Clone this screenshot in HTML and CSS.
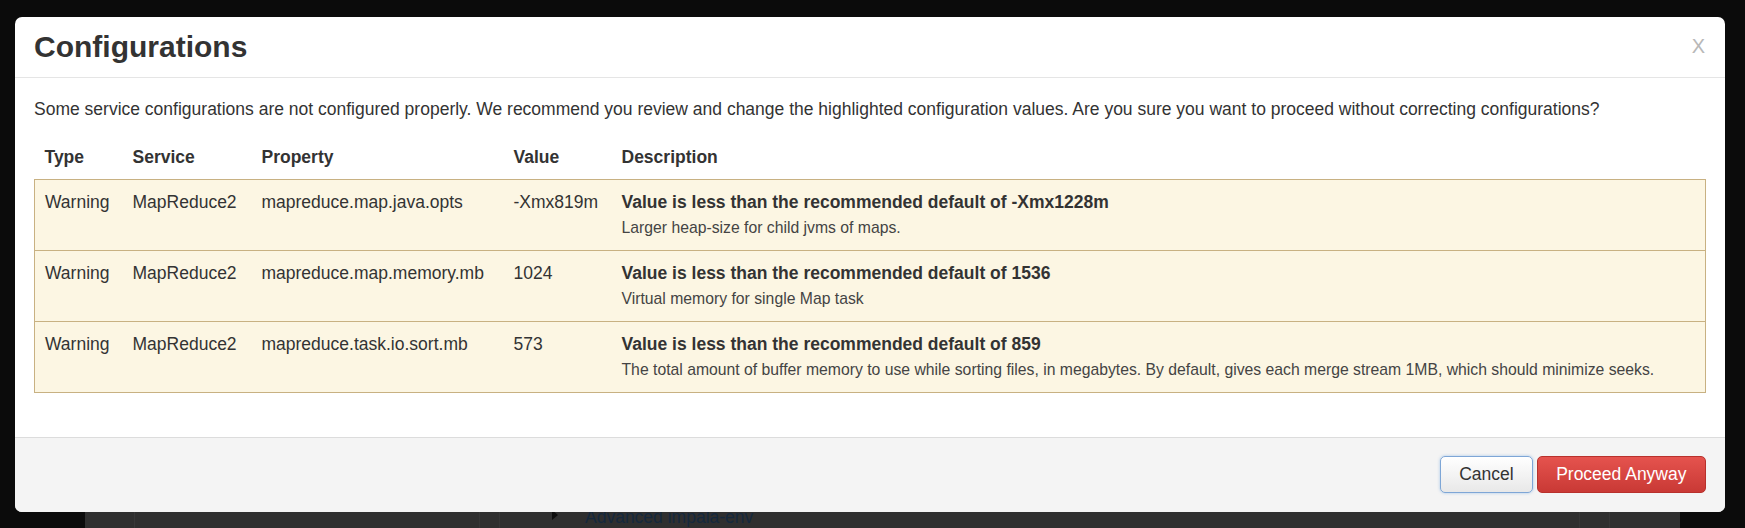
FILE: index.html
```html
<!DOCTYPE html>
<html lang="en">
<head>
<meta charset="utf-8">
<title>Configurations</title>
<link rel="stylesheet" href="styles.css">
</head>
<body>
<div class="page">
  <div class="page-panel">
    <div class="pcell c1"></div>
    <div class="pcell c2"></div>
    <div class="pcell c3"></div>
    <div class="pcell c4"><span class="caret"></span><a class="plink">Advanced impala-env</a></div>
    <div class="pcell c5"></div>
    <div class="pcell c6"></div>
  </div>
</div>

<div class="modal">
  <div class="modal-header">
    <h3 class="modal-title">Configurations</h3>
    <span class="close">X</span>
  </div>
  <div class="modal-body">
    <p class="intro">Some service configurations are not configured properly. We recommend you review and change the highlighted configuration values. Are you sure you want to proceed without correcting configurations?</p>
    <table class="cfg">
      <colgroup>
        <col class="w-type"><col class="w-service"><col class="w-prop"><col class="w-value"><col>
      </colgroup>
      <thead>
        <tr><th>Type</th><th>Service</th><th>Property</th><th>Value</th><th>Description</th></tr>
      </thead>
      <tbody>
        <tr class="warning">
          <td>Warning</td><td>MapReduce2</td><td>mapreduce.map.java.opts</td><td>-Xmx819m</td>
          <td><div class="msg">Value is less than the recommended default of -Xmx1228m</div><div class="sub">Larger heap-size for child jvms of maps.</div></td>
        </tr>
        <tr class="warning">
          <td>Warning</td><td>MapReduce2</td><td>mapreduce.map.memory.mb</td><td>1024</td>
          <td><div class="msg">Value is less than the recommended default of 1536</div><div class="sub">Virtual memory for single Map task</div></td>
        </tr>
        <tr class="warning">
          <td>Warning</td><td>MapReduce2</td><td>mapreduce.task.io.sort.mb</td><td>573</td>
          <td><div class="msg">Value is less than the recommended default of 859</div><div class="sub">The total amount of buffer memory to use while sorting files, in megabytes. By default, gives each merge stream 1MB, which should minimize seeks.</div></td>
        </tr>
      </tbody>
    </table>
  </div>
  <div class="modal-footer">
    <button class="btn btn-cancel">Cancel</button>
    <button class="btn btn-danger">Proceed Anyway</button>
  </div>
</div>
</body>
</html>
```
FILE: styles.css
```css
html, body {
  margin: 0;
  padding: 0;
  height: 100%;
  overflow: hidden;
}
body {
  background: #0b0b0b;
  font-family: "Liberation Sans", Arial, sans-serif;
  font-size: 17.5px;
  line-height: 25px;
  color: #333;
  position: relative;
}

/* underlying page seen through the backdrop */
.page {
  padding-top: 490px;
  padding-left: 85px;
}
.page-panel {
  width: 1595px;
  height: 60px;
  background: #2f2f2f;
  display: flex;
}
.pcell {
  height: 100%;
  box-sizing: border-box;
}
.c1 { width: 50px; border-right: 1px solid #383838; }
.c2 { width: 345px; border-right: 1px solid #363636; }
.c3 { width: 20px; border-right: 1px solid #363636; }
.c4 {
  width: 1080px;
  border-right: 1px solid #363636;
  padding-left: 52px;
  padding-top: 15px;
  display: flex;
  align-items: flex-start;
}
.c5 { width: 30px; border-right: 1px solid #363636; }
.c6 { flex: 1; }
.caret {
  width: 0;
  height: 0;
  border-top: 5px solid transparent;
  border-bottom: 5px solid transparent;
  border-left: 6px solid #0d0d0d;
  margin-top: 5px;
  margin-right: 27px;
}
.plink {
  color: #15283d;
  font-size: 17.5px;
  line-height: 25px;
}

/* modal */
.modal {
  position: absolute;
  left: 15px;
  top: 17px;
  width: 1710px;
  background: #fff;
  border-radius: 7px;
  overflow: hidden;
}
.modal-header {
  display: flex;
  align-items: center;
  justify-content: space-between;
  padding: 11px 20px 11px 19px;
  border-bottom: 1px solid #e5e5e5;
}
.modal-title {
  margin: 0;
  font-size: 30px;
  line-height: 38px;
  font-weight: bold;
  color: #333;
}
.close {
  font-size: 20px;
  line-height: 20px;
  color: #b8b8b8;
  margin-top: -2px;
}
.modal-body {
  padding: 19px 19px 19px;
}
.intro {
  margin: 0 0 12.5px;
  color: #333;
}
.cfg {
  width: 100%;
  border-collapse: collapse;
  table-layout: fixed;
  margin-bottom: 25px;
}
.w-type { width: 88px; }
.w-service { width: 129px; }
.w-prop { width: 252px; }
.w-value { width: 108px; }
.cfg th {
  text-align: left;
  font-weight: bold;
  padding: 10px 10px 9px;
  line-height: 25px;
  vertical-align: top;
}
.cfg td {
  padding: 10px 10px;
  line-height: 25px;
  vertical-align: top;
}
.cfg tr.warning {
  background: #fcf6e3;
  border: 1px solid #c8b182;
}
.msg {
  font-weight: bold;
}
.sub {
  font-size: 15.75px;
  color: #444;
}

.modal-footer {
  background: #f4f4f4;
  border-top: 1px solid #dcdcdc;
  padding: 18.5px 19px 18.5px;
  display: flex;
  justify-content: flex-end;
  gap: 4px;
}
.btn {
  font-family: "Liberation Sans", Arial, sans-serif;
  font-size: 17.5px;
  line-height: 25px;
  height: 37px;
  border-radius: 5px;
  box-sizing: border-box;
  margin: 0;
}
.btn-cancel {
  padding: 0 18px;
  color: #333;
  background: linear-gradient(#ffffff, #e8e8e8);
  border: 1px solid #7ea6d6;
  box-shadow: 0 0 3px rgba(82, 148, 220, 0.5);
}
.btn-danger {
  padding: 0 18.5px;
  color: #fff;
  background: linear-gradient(#e5534e, #c93935);
  border: 1px solid #b8312c;
}
```
